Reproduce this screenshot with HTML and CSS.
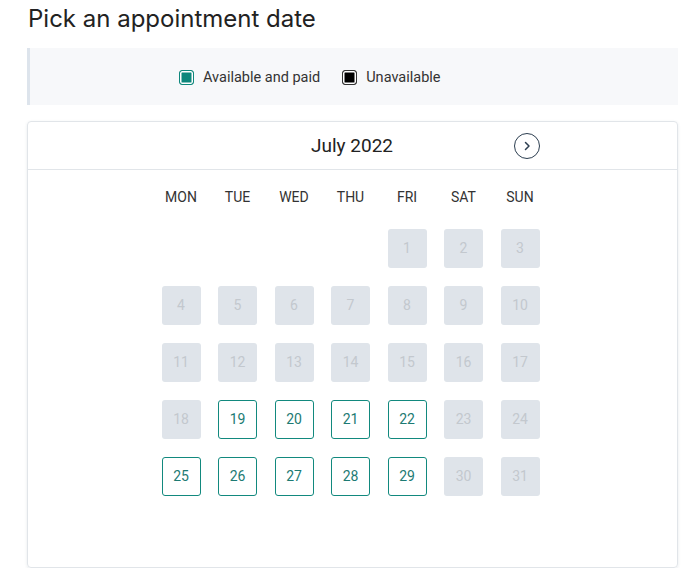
FILE: index.html
```html
<!DOCTYPE html>
<html lang="en">
  <head>
    <meta charset="UTF-8" />
    <meta name="viewport" content="width=device-width, initial-scale=1.0" />
    <title>Pick an appointment date</title>
    <link rel="stylesheet" href="styles.css">
  </head>
  <body>
    <h1>Pick an appointment date</h1>
    <div class="legend">
      <span class="legend-item"><span class="swatch swatch-paid"></span>Available and paid</span>
      <span class="legend-item"><span class="swatch swatch-off"></span>Unavailable</span>
    </div>
    <div class="calendar">
      <div class="calendar-header">
        <div class="header-inner">
          <span class="spacer"></span>
          <span class="month">July 2022</span>
          <button class="next" aria-label="Next month">
            <svg width="10" height="10" viewBox="0 0 10 10"><path d="M3.5 1.5 L7 5 L3.5 8.5" fill="none" stroke="#2c3e50" stroke-width="1.5" stroke-linecap="round" stroke-linejoin="round"/></svg>
          </button>
        </div>
      </div>
      <div class="calendar-body">
        <div class="weekdays">
          <span>MON</span><span>TUE</span><span>WED</span><span>THU</span><span>FRI</span><span>SAT</span><span>SUN</span>
        </div>
        <div class="days" id="days"></div>
      </div>
    </div>
    <script>
      const available = [19, 20, 21, 22, 25, 26, 27, 28, 29];
      const daysEl = document.querySelector('#days');
      // July 2022 starts on a Friday
      for (let i = 0; i < 4; i++) {
        daysEl.appendChild(document.createElement('span'));
      }
      for (let d = 1; d <= 31; d++) {
        const cell = document.createElement('span');
        cell.className = available.includes(d) ? 'day day-open' : 'day day-off';
        cell.textContent = d;
        daysEl.appendChild(cell);
      }
    </script>
  </body>
</html>
```

FILE: styles.css
```css
body {
  font-family: Roboto, "Liberation Sans", sans-serif;
  margin: 0;
  padding: 0 20px 0 27px;
  background-color: #fff;
  color: #333;
}
h1 {
  font-family: Inter, "Liberation Sans", sans-serif;
  font-size: 24px;
  font-weight: 400;
  line-height: 30px;
  color: #222;
  margin: 4px 0 14px 1px;
}
.legend {
  display: flex;
  align-items: center;
  gap: 22px;
  height: 55px;
  padding-top: 2px;
  padding-left: 149px;
  background-color: #f7f8fa;
  border-left: 3px solid #dde4ec;
  font-size: 14.5px;
}
.legend-item {
  display: flex;
  align-items: center;
  gap: 9px;
}
.swatch {
  width: 13px;
  height: 13px;
  border-radius: 3px;
  box-shadow: inset 0 0 0 1.5px #fff;
}
.swatch-paid {
  background-color: #0e877c;
  border: 1px solid #0e877c;
}
.swatch-off {
  background-color: #000;
  border: 1px solid #333;
}
.calendar {
  margin-top: 16px;
  border: 1px solid #e1e5e9;
  border-radius: 4px;
  box-shadow: 0 1px 3px rgba(60, 80, 110, 0.12);
  padding-bottom: 71px;
}
.calendar-header {
  height: 47px;
  border-bottom: 1px solid #e1e5e9;
  display: flex;
  justify-content: center;
  align-items: center;
  padding-right: 3px;
}
.header-inner {
  width: 376px;
  display: flex;
  justify-content: space-between;
  align-items: center;
  padding-left: 2px;
}
.spacer {
  width: 26px;
}
.month {
  font-size: 19px;
  color: #222;
}
.next {
  width: 26px;
  height: 26px;
  border: 1.5px solid #2c3e50;
  border-radius: 50%;
  background: #fff;
  padding: 0;
  display: flex;
  align-items: center;
  justify-content: center;
  cursor: pointer;
}
.calendar-body {
  padding-top: 17px;
  padding-right: 4px;
  display: flex;
  flex-direction: column;
  align-items: center;
}
.weekdays,
.days {
  display: grid;
  grid-template-columns: repeat(7, 39px);
  column-gap: 17.5px;
}
.weekdays {
  font-size: 14px;
  color: #333;
  line-height: 20px;
  text-align: center;
  margin-bottom: 22px;
}
.days {
  row-gap: 18px;
}
.day {
  height: 39px;
  line-height: 39px;
  text-align: center;
  font-size: 14px;
  border-radius: 3px;
  box-sizing: border-box;
}
.day-off {
  background-color: #dfe4ea;
  color: #c3c8ce;
}
.day-open {
  border: 1px solid #12897e;
  line-height: 37px;
  color: #1d7b73;
  cursor: pointer;
}
```
